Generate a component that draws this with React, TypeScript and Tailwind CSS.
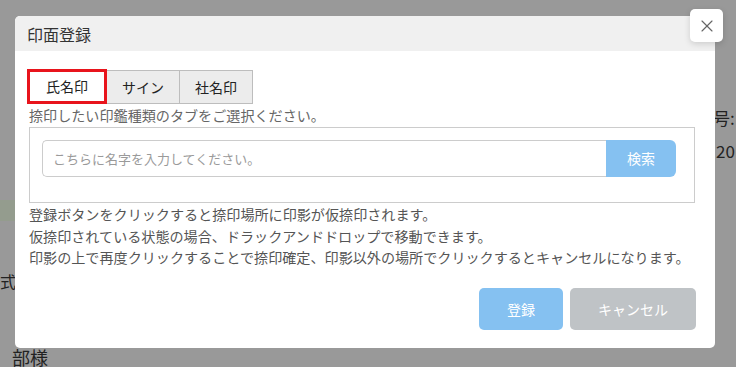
import { X } from 'lucide-react'

const font = { fontFamily: '"Noto Sans CJK JP", "Noto Sans", sans-serif' }

function Backdrop() {
  return (
    <div className="flex h-full w-full justify-between">
      <div className="flex w-[15px] flex-col">
        <div className="mt-[200px] h-[32px] w-full bg-[#949c8e]" />
        <div className="mt-[50px] text-[16px] leading-[20px] text-[#222] whitespace-nowrap">式</div>
        <div className="ml-[12px] mt-[56px] text-[18px] leading-[20px] text-[#222] whitespace-nowrap">部様</div>
      </div>
      <div className="flex w-[23px] flex-col">
        <div className="mt-[108px] text-[17px] leading-[20px] text-[#222] whitespace-nowrap">号:</div>
        <div className="ml-[3px] mt-[13px] text-[17px] leading-[20px] text-[#222] whitespace-nowrap">20</div>
      </div>
    </div>
  )
}

export default function App() {
  const tabs = ['氏名印', 'サイン', '社名印']
  return (
    <div className="relative h-[367px] w-[736px] overflow-hidden bg-[#999999]" style={font}>
      <Backdrop />

      {/* modal */}
      <div className="absolute left-[15px] top-[16px] flex h-[332px] w-[700px] flex-col rounded-[5px] bg-white">
        <div className="flex h-[35px] items-center rounded-t-[5px] bg-[#f0f0f0] pl-[12px] text-[16px] text-[#333]">
          印面登録
        </div>

        <div className="flex flex-col px-[14px] pt-[18px]">
          <div className="flex items-end">
            {tabs.map((t, i) =>
              i === 0 ? (
                <div key={t} className="-ml-[2px] flex h-[35px] w-[80px] items-center justify-center border-[3px] border-[#e8141c] bg-white text-[14px] text-[#222]">
                  {t}
                </div>
              ) : (
                <div key={t} className="flex h-[34px] w-[73px] items-center justify-center border border-l-0 border-[#bdbdbd] bg-[#ececec] text-[14px] text-[#222]">
                  {t}
                </div>
              )
            )}
          </div>
          <p className="mt-[1px] text-[14.1px] leading-[21px] text-[#666]">捺印したい印鑑種類のタブをご選択ください。</p>

          <div className="mt-[1px] h-[76px] w-[666px] border border-[#cccccc] pl-[12px] pr-[18px] pt-[12px]">
            <div className="flex h-[37px]">
              <input
                className="h-full flex-1 rounded-l-[5px] border border-r-0 border-[#cccccc] px-[10px] text-[13px] text-[#333] outline-none placeholder:text-[#9a9a9a]"
                placeholder="こちらに名字を入力してください。"
                style={font}
              />
              <button className="h-full w-[70px] rounded-r-[6px] bg-[#85c1f1] text-[14px] text-white">検索</button>
            </div>
          </div>

          <div className="mt-[1px] text-[14.1px] leading-[21.5px] text-[#555]">
            <p>登録ボタンをクリックすると捺印場所に印影が仮捺印されます。</p>
            <p>仮捺印されている状態の場合、ドラックアンドドロップで移動できます。</p>
            <p>印影の上で再度クリックすることで捺印確定、印影以外の場所でクリックするとキャンセルになります。</p>
          </div>
        </div>

        <div className="mt-auto flex justify-end gap-[7px] pb-[18px] pr-[19px]">
          <button className="h-[42px] w-[84px] rounded-[5px] bg-[#85c1f1] text-[14px] text-white">登録</button>
          <button className="h-[42px] w-[126px] rounded-[5px] bg-[#bfc3c6] text-[14px] text-white">キャンセル</button>
        </div>
      </div>

      {/* close */}
      <button className="absolute left-[690px] top-[9px] flex h-[33px] w-[33px] items-center justify-center rounded-[5px] bg-white shadow-[0_2px_6px_rgba(0,0,0,0.15)]">
        <X size={20} strokeWidth={1.4} className="text-[#666]" />
      </button>
    </div>
  )
}
